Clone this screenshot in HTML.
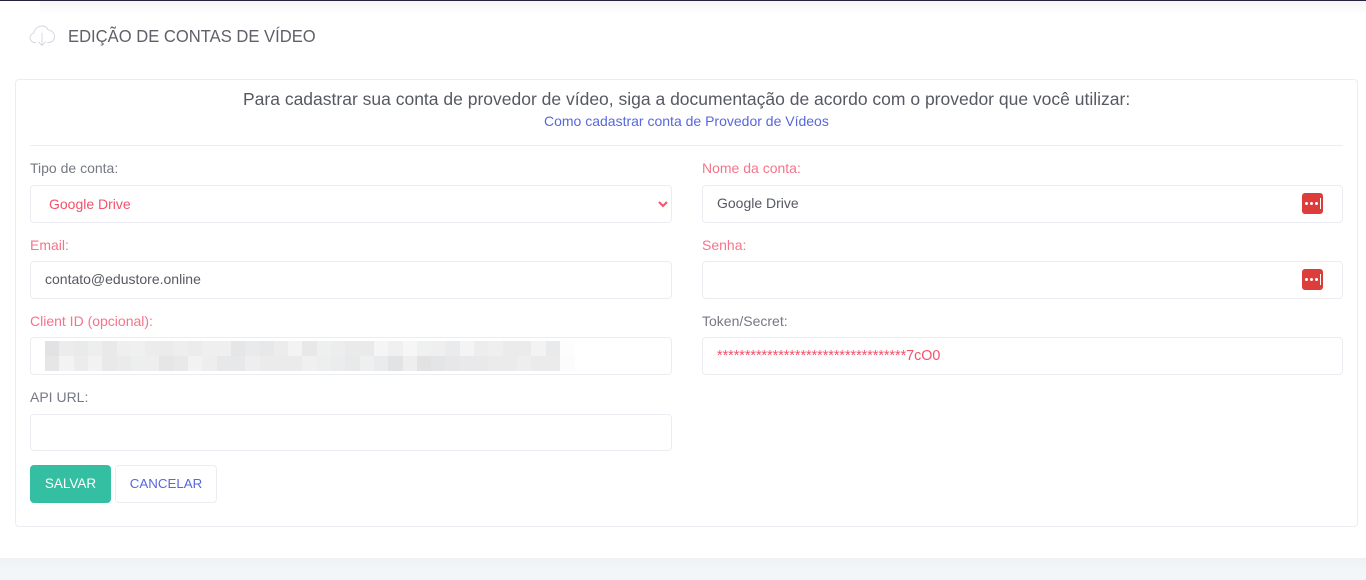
<!DOCTYPE html>
<html lang="pt">
<head>
<meta charset="utf-8">
<title>Edição de contas de vídeo</title>
<style>
html,body{margin:0;padding:0;background:#fff}
body{width:1366px;height:580px;position:relative;overflow:hidden;font-family:"Liberation Sans",sans-serif;font-size:14px;color:#575962}
.a{position:absolute;white-space:nowrap}
.box{position:absolute;box-sizing:border-box;background:#fff;border:1px solid #ebedf2;border-radius:4px}
.l{position:absolute;white-space:nowrap;font-size:14px;line-height:16px;color:#767983}
.r{color:#f4516c;opacity:.8}
.t{position:absolute;white-space:nowrap;font-size:14px;line-height:16px}
.key{position:absolute;width:21px;height:21px;background:#dc3d3a;border-radius:3px}
.key i{position:absolute;top:9px;width:3px;height:3px;border-radius:50%;background:#fff}
.key b{position:absolute;left:18px;top:5px;width:1px;height:11px;background:#fff}
.cell{position:absolute;height:15px;width:15px}
</style>
</head>
<body>
<div class="a" style="left:0;top:0;width:1366px;height:1px;background:#23233a"></div>
<div class="a" style="left:40px;top:1px;width:1326px;height:14px;background:linear-gradient(#f6f6f7,#fff)"></div>

<svg class="a" style="left:29px;top:24px" width="27" height="23" viewBox="0 0 27 23" fill="none" stroke="#cfcedb" stroke-width=".8" stroke-linecap="round" stroke-linejoin="round">
<path d="M7 18.5H6C3 18.5 1 16.3 1 13.6C1 11.2 2.7 9.3 5 8.9C5.4 5.5 8 2.5 12.5 2C15.6 1.7 18 3.4 19.2 6C22.800 6.300 25.500 9 25.500 12.500C25.500 16 23 18.500 19.500 18.500H18.500"/>
<path d="M13 9V21.500M9.500 18L13 21.500L16.500 18"/>
</svg>
<div class="a" style="left:68px;top:26px;font-size:17.6px;line-height:21px;color:#5f6069;transform:scaleX(.943);transform-origin:0 50%">EDIÇÃO DE CONTAS DE VÍDEO</div>

<div class="box" style="left:15px;top:79px;width:1343px;height:448px"></div>
<div class="a" style="left:243px;top:89px;font-size:17.5px;line-height:20px;color:#575962">Para cadastrar sua conta de provedor de vídeo, siga a documentação de acordo com o provedor que você utilizar:</div>
<div class="a" style="left:544px;top:113px;font-size:14px;line-height:16px;color:#5867dd">Como cadastrar conta de Provedor de Vídeos</div>
<div class="a" style="left:30px;top:145px;width:1313px;height:1px;background:#ebedf2"></div>

<div class="l" style="left:30px;top:160px">Tipo de conta:</div>
<div class="box" style="left:30px;top:185px;width:642px;height:38px"></div>
<div class="t" style="left:49px;top:196px;color:#f4516c">Google Drive</div>
<svg class="a" style="left:658px;top:201px" width="10" height="7" viewBox="0 0 10 7" fill="none" stroke="#f4516c" stroke-width="2"><path d="M1 1L5 5L9 1"/></svg>

<div class="l r" style="left:702px;top:160px">Nome da conta:</div>
<div class="box" style="left:702px;top:185px;width:641px;height:38px"></div>
<div class="t" style="left:717px;top:195px;color:#575962">Google Drive</div>
<div class="key" style="left:1302px;top:193px"><i style="left:3px"></i><i style="left:8px"></i><i style="left:13px"></i><b></b></div>

<div class="l r" style="left:30px;top:237px">Email:</div>
<div class="box" style="left:30px;top:261px;width:642px;height:38px"></div>
<div class="t" style="left:45px;top:271px;color:#575962">contato@edustore.online</div>

<div class="l r" style="left:702px;top:237px">Senha:</div>
<div class="box" style="left:702px;top:261px;width:641px;height:38px"></div>
<div class="key" style="left:1302px;top:269px"><i style="left:3px"></i><i style="left:8px"></i><i style="left:13px"></i><b></b></div>

<div class="l r" style="left:30px;top:313px">Client ID (opcional):</div>
<div class="box" style="left:30px;top:337px;width:642px;height:38px"></div>
<div class="a" style="left:45px;top:341px;width:530px;height:30px">
<div class="cell" style="left:0;background:#e2e2e4"></div><div class="cell" style="left:14.3px;background:#ececec"></div><div class="cell" style="left:28.6px;background:#e9eaec"></div><div class="cell" style="left:42.9px;background:#ecefee"></div><div class="cell" style="left:57.2px;background:#e9e9e9"></div><div class="cell" style="left:71.5px;background:#eeefee"></div><div class="cell" style="left:85.8px;background:#f0f0f0"></div><div class="cell" style="left:100.1px;background:#ececec"></div><div class="cell" style="left:114.4px;background:#ebebeb"></div><div class="cell" style="left:128.7px;background:#eeeeee"></div><div class="cell" style="left:143px;background:#ececec"></div><div class="cell" style="left:157.3px;background:#efefef"></div><div class="cell" style="left:171.6px;background:#efefef"></div><div class="cell" style="left:185.9px;background:#e6e6e8"></div><div class="cell" style="left:200.2px;background:#e9eaec"></div><div class="cell" style="left:214.5px;background:#e7e8ea"></div><div class="cell" style="left:228.8px;background:#ececec"></div><div class="cell" style="left:243.1px;background:#f2f3f2"></div><div class="cell" style="left:257.4px;background:#e8e8e8"></div><div class="cell" style="left:271.7px;background:#eef0ef"></div><div class="cell" style="left:286px;background:#ededed"></div><div class="cell" style="left:300.3px;background:#eaeaea"></div><div class="cell" style="left:314.6px;background:#eaeaea"></div><div class="cell" style="left:328.9px;background:#f5f5f5"></div><div class="cell" style="left:343.2px;background:#f0f0f0"></div><div class="cell" style="left:357.5px;background:#f6f6f6"></div><div class="cell" style="left:371.8px;background:#eff1f0"></div><div class="cell" style="left:386.1px;background:#efefef"></div><div class="cell" style="left:400.4px;background:#eaebed"></div><div class="cell" style="left:414.7px;background:#f4f4f4"></div><div class="cell" style="left:429px;background:#ededed"></div><div class="cell" style="left:443.3px;background:#efefef"></div><div class="cell" style="left:457.6px;background:#ebebeb"></div><div class="cell" style="left:471.9px;background:#ebebeb"></div><div class="cell" style="left:486.2px;background:#f3f3f3"></div><div class="cell" style="left:500.500px;background:#e9eaec"></div><div class="cell" style="left:514.8px;background:#fdfdfd"></div>
<div class="cell" style="top:15px;left:0;background:#e6e6e6"></div><div class="cell" style="top:15px;left:14.3px;background:#f3f3f3"></div><div class="cell" style="top:15px;left:28.6px;background:#ececec"></div><div class="cell" style="top:15px;left:42.9px;background:#f2f2f2"></div><div class="cell" style="top:15px;left:57.2px;background:#e9e9e9"></div><div class="cell" style="top:15px;left:71.5px;background:#ebebeb"></div><div class="cell" style="top:15px;left:85.8px;background:#edefee"></div><div class="cell" style="top:15px;left:100.1px;background:#eeeeee"></div><div class="cell" style="top:15px;left:114.4px;background:#e6e6e6"></div><div class="cell" style="top:15px;left:128.7px;background:#e9e9e9"></div><div class="cell" style="top:15px;left:143px;background:#f2f2f2"></div><div class="cell" style="top:15px;left:157.3px;background:#eeeeee"></div><div class="cell" style="top:15px;left:171.6px;background:#e7e8ea"></div><div class="cell" style="top:15px;left:185.9px;background:#e8e8ea"></div><div class="cell" style="top:15px;left:200.2px;background:#eeeeee"></div><div class="cell" style="top:15px;left:214.5px;background:#ebebeb"></div><div class="cell" style="top:15px;left:228.8px;background:#ebebeb"></div><div class="cell" style="top:15px;left:243.1px;background:#ebebeb"></div><div class="cell" style="top:15px;left:257.4px;background:#f0f0f0"></div><div class="cell" style="top:15px;left:271.7px;background:#edefee"></div><div class="cell" style="top:15px;left:286px;background:#ebecee"></div><div class="cell" style="top:15px;left:300.3px;background:#e9e9e9"></div><div class="cell" style="top:15px;left:314.6px;background:#eef0ef"></div><div class="cell" style="top:15px;left:328.9px;background:#eaebed"></div><div class="cell" style="top:15px;left:343.2px;background:#e2e3e4"></div><div class="cell" style="top:15px;left:357.5px;background:#eeeeee"></div><div class="cell" style="top:15px;left:371.8px;background:#e2e2e2"></div><div class="cell" style="top:15px;left:386.1px;background:#e4e5e6"></div><div class="cell" style="top:15px;left:400.4px;background:#e7e7e7"></div><div class="cell" style="top:15px;left:414.7px;background:#e9e9eb"></div><div class="cell" style="top:15px;left:429px;background:#e9e9e9"></div><div class="cell" style="top:15px;left:443.3px;background:#ebebeb"></div><div class="cell" style="top:15px;left:457.6px;background:#ebebeb"></div><div class="cell" style="top:15px;left:471.9px;background:#eeeeee"></div><div class="cell" style="top:15px;left:486.2px;background:#ebebeb"></div><div class="cell" style="top:15px;left:500.500px;background:#ebebeb"></div><div class="cell" style="top:15px;left:514.8px;background:#fcfcfc"></div>
</div>

<div class="l" style="left:702px;top:313px">Token/Secret:</div>
<div class="box" style="left:702px;top:337px;width:641px;height:38px"></div>
<div class="t" style="left:717px;top:348px;font-size:14.3px;color:#f4516c">**********************************7cO0</div>

<div class="l" style="left:30px;top:389px">API URL:</div>
<div class="box" style="left:30px;top:414px;width:642px;height:37px"></div>

<div class="a" style="left:30px;top:465px;width:81px;height:38px;background:#34bfa3;border-radius:4px;color:#fff;font-size:13.5px;line-height:37px;text-align:center">SALVAR</div>
<div class="box" style="left:115px;top:465px;width:102px;height:38px;color:#5867dd;font-size:13.3px;line-height:35px;text-align:center">CANCELAR</div>

<div class="a" style="left:0;top:558px;width:1366px;height:22px;background:linear-gradient(#eef1f3,#f3f6f9 60%)"></div>
</body>
</html>
